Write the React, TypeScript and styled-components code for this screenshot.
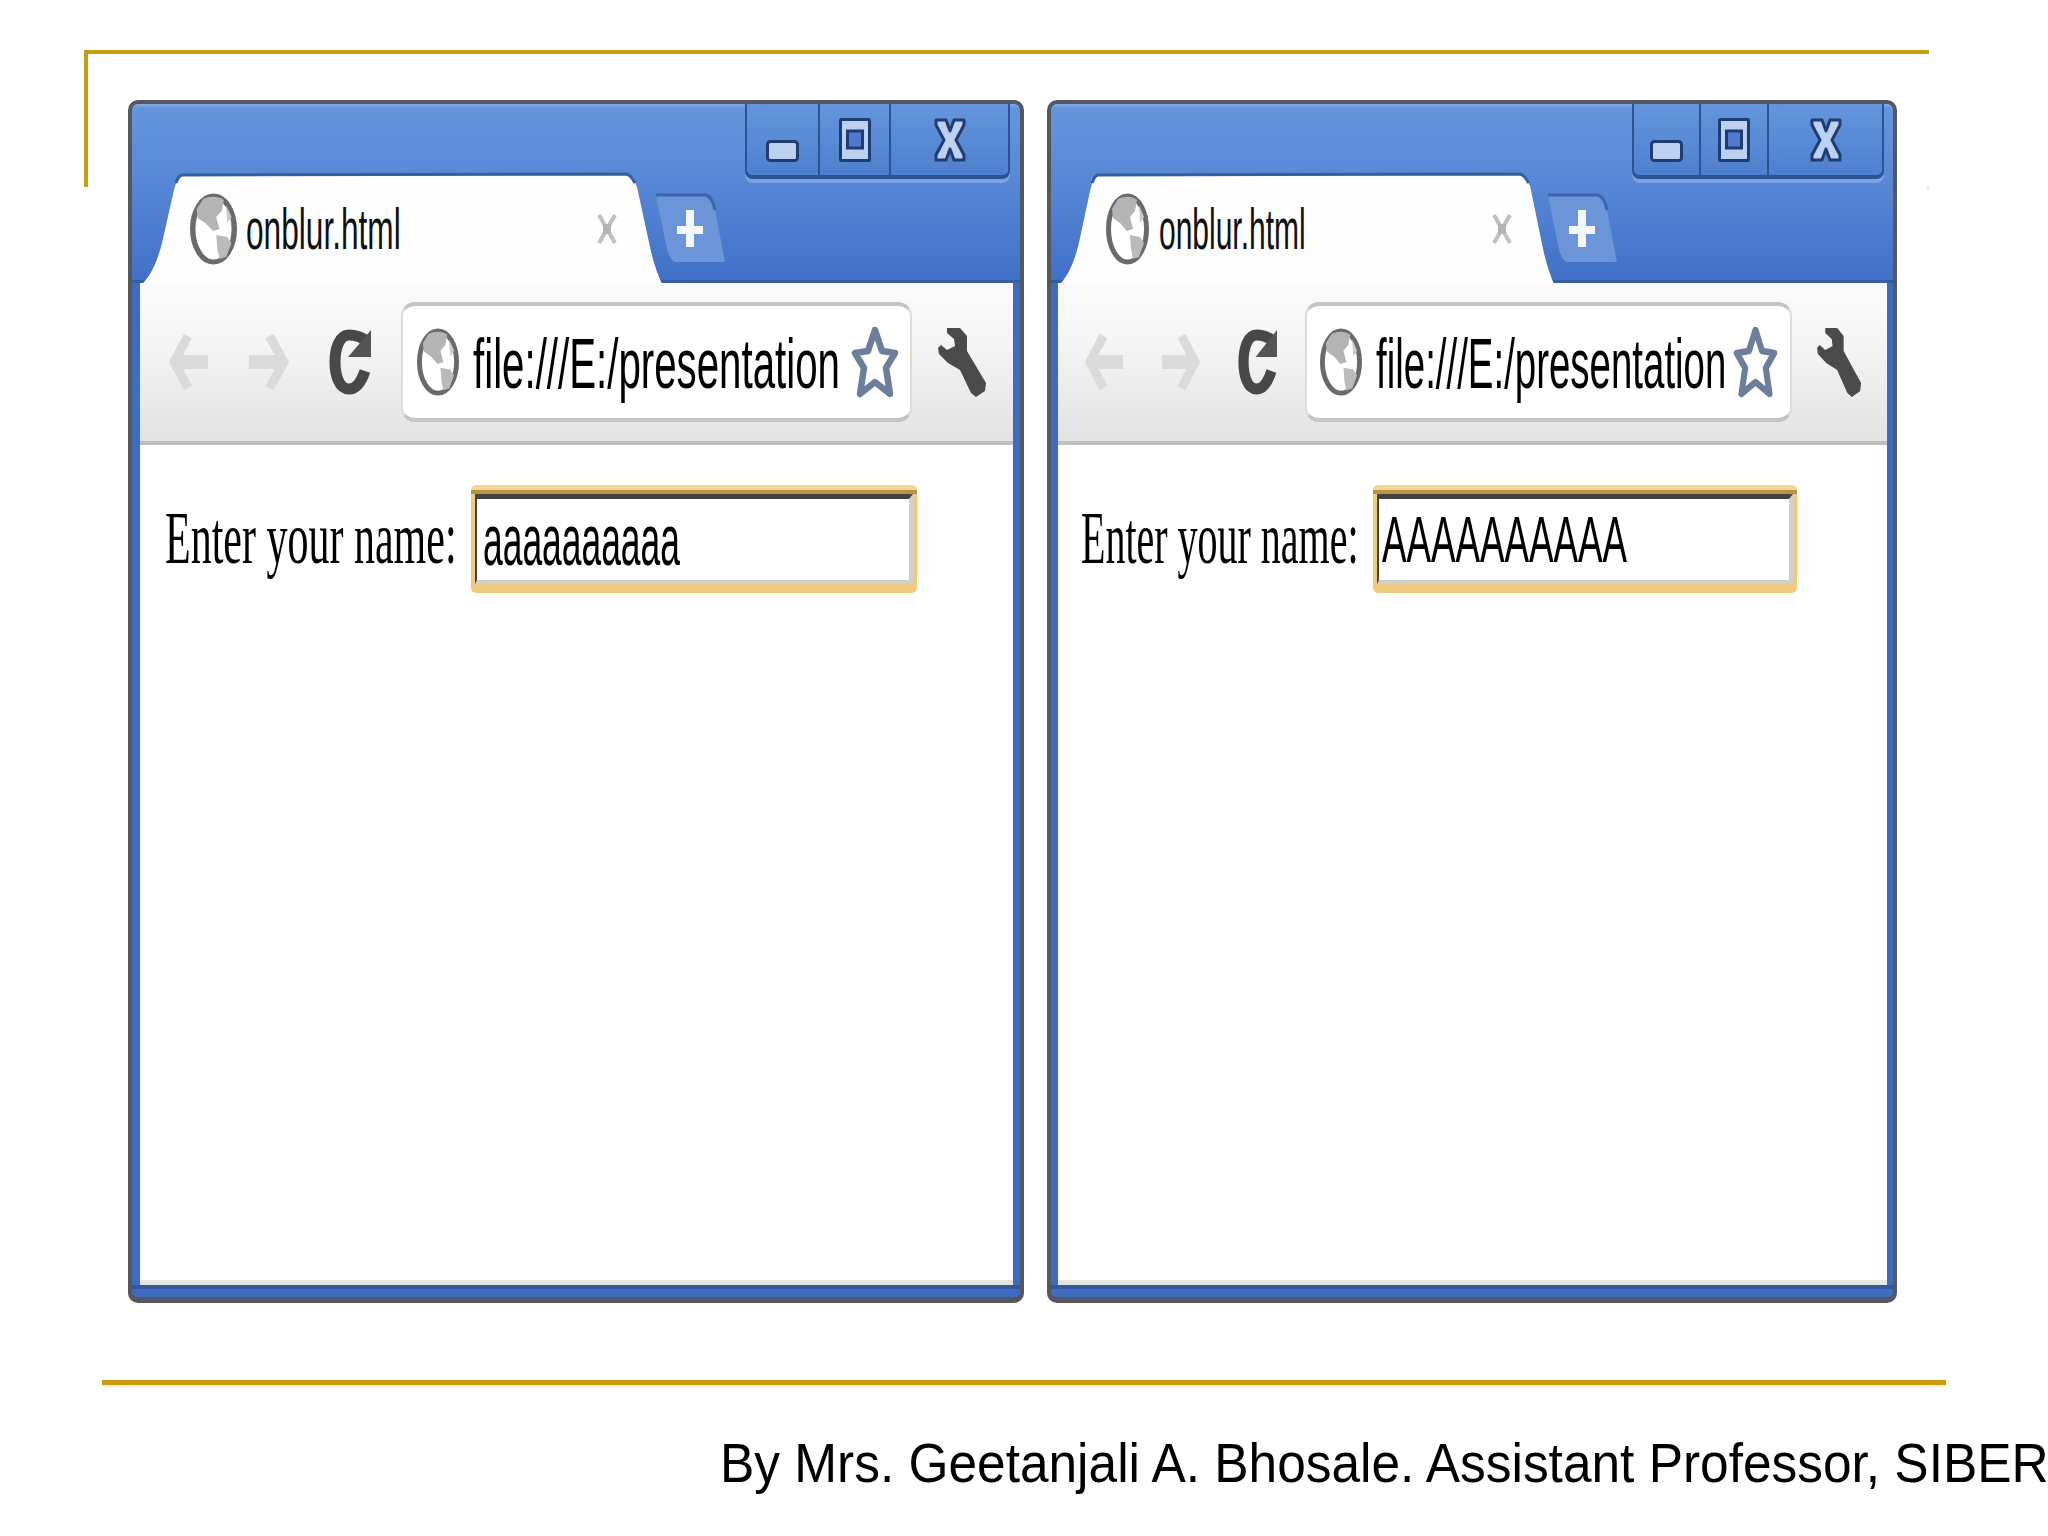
import React from "react";
import styled, { createGlobalStyle } from "styled-components";

const GlobalStyle = createGlobalStyle`
  html, body { margin: 0; padding: 0; background: #fff; }
  body { width: 2048px; height: 1536px; overflow: hidden; font-family: "Liberation Sans", Arial, sans-serif; }
`;

const Slide = styled.main`
  width: 2048px;
  height: 1536px;
  padding-top: 50px;
  box-sizing: border-box;
  overflow: hidden;
  background: #fff;
`;

const TopRule = styled.div`
  position: relative;
  width: 1845px;
  height: 4px;
  margin-left: 84px;
  background: #c79c13;
  &::before {
    content: "";
    position: absolute;
    left: 0;
    top: 0;
    width: 4px;
    height: 137px;
    background: #c79c13;
  }
  &::after {
    content: "";
    position: absolute;
    right: 0;
    top: 136px;
    width: 2px;
    height: 3px;
    background: #f1e4b4;
  }
`;

const WindowsRow = styled.div`
  display: flex;
  gap: 23px;
  margin: 46px 0 0 128px;
`;

const Frame = styled.section<{ $w: number; $pl: number; $pr: number }>`
  box-sizing: border-box;
  width: ${(p) => p.$w}px;
  height: 1203px;
  display: flex;
  flex-direction: column;
  border: 4px solid #55585f;
  border-bottom-width: 6px;
  border-radius: 10px;
  background: linear-gradient(to top, #3f6cc0 0 8px, #2f5a9e 8px 12px, #3f6cc0 12px);
  --pl: ${(p) => p.$pl}px;
  --pr: ${(p) => p.$pr}px;
`;

const TitleBar = styled.header`
  height: 179px;
  flex: none;
  display: flex;
  flex-direction: column;
  border-radius: 6px 6px 0 0;
  background: linear-gradient(#86aae2 0, #6395dc 4px, #5c8bd8 60px, #4070c6 100%);
`;

const Controls = styled.div<{ $mr: number }>`
  align-self: flex-end;
  flex: none;
  display: flex;
  height: 75px;
  margin: 0 ${(p) => p.$mr}px -4px 0;
  box-sizing: border-box;
  border: 2px solid #2d5392;
  border-top: 0;
  border-bottom-width: 4px;
  border-radius: 0 0 8px 8px;
  box-shadow: 0 4px 0 #7aa3e6;
  background: linear-gradient(#6396dd, #4f80cf);
`;

const ControlButton = styled.div<{ $w: number }>`
  width: ${(p) => p.$w}px;
  box-sizing: border-box;
  display: flex;
  justify-content: center;
  align-items: flex-end;
  padding-bottom: 13px;
  & + & { border-left: 2px solid #2d5392; }
`;

const TabStrip = styled.div`
  height: 108px;
  flex: none;
  display: flex;
  align-items: flex-start;
  padding-left: var(--pl);
  box-sizing: border-box;
  border-bottom: 3px solid #33609f;
`;

const Tab = styled.div<{ $w: number; $pr: number }>`
  position: relative;
  flex: none;
  width: ${(p) => p.$w}px;
  height: 108px;
  display: flex;
  align-items: center;
  box-sizing: border-box;
  padding-right: ${(p) => p.$pr}px;
`;

const TabShape = styled.svg`
  position: absolute;
  left: 0;
  top: 0;
  width: 100%;
  height: 100%;
  overflow: visible;
`;

const TabGlobe = styled.svg<{ $w: number; $ml: number }>`
  position: relative;
  flex: none;
  width: ${(p) => p.$w}px;
  height: 72px;
  margin-left: ${(p) => p.$ml}px;
`;

const Squeezed = styled.span<{ $w: number; $sx: number }>`
  display: block;
  flex: none;
  width: ${(p) => p.$w}px;
  white-space: nowrap;
  transform: scaleX(${(p) => p.$sx});
  transform-origin: left center;
`;

const TabTitle = styled(Squeezed)<{ $ml: number }>`
  position: relative;
  margin-left: ${(p) => p.$ml}px;
  font-size: 57px;
  line-height: 66px;
  color: #111;
`;

const TabClose = styled.svg`
  position: relative;
  flex: none;
  width: 22px;
  height: 34px;
  margin-left: auto;
`;

const NewTab = styled.svg<{ $ml: number }>`
  flex: none;
  width: 69px;
  height: 67px;
  margin: 20px 0 0 ${(p) => p.$ml}px;
  overflow: visible;
`;

const Body = styled.div`
  flex: 1;
  min-height: 0;
  display: flex;
  flex-direction: column;
  margin: 0 var(--pr) 12px var(--pl);
  position: relative;
`;

const Toolbar = styled.nav<{ $pl: number }>`
  flex: none;
  height: 162px;
  box-sizing: border-box;
  display: flex;
  align-items: center;
  padding-left: ${(p) => p.$pl}px;
  border-bottom: 4px solid #bfbfbf;
  background: linear-gradient(#fbfbfb, #f4f4f5 40%, #e2e2e4);
`;

const ToolIcon = styled.svg<{ $w: number; $h: number; $ml?: number }>`
  flex: none;
  width: ${(p) => p.$w}px;
  height: ${(p) => p.$h}px;
  margin-left: ${(p) => p.$ml ?? 0}px;
`;

const UrlBar = styled.div<{ $w: number; $ml: number; $gap: number }>`
  flex: none;
  width: ${(p) => p.$w}px;
  height: 120px;
  margin-left: ${(p) => p.$ml}px;
  padding-left: ${(p) => p.$gap}px;
  box-sizing: border-box;
  display: flex;
  align-items: center;
  background: #fff;
  border: 2px solid #dcdcdc;
  border-top: 4px solid #c4c4c4;
  border-bottom: 4px solid #c4c4c4;
  border-radius: 14px;
`;

const UrlText = styled(Squeezed)`
  margin: 3px 0 0 14px;
  font-size: 70px;
  line-height: 80px;
  color: #000;
`;

const Content = styled.div<{ $pl: number }>`
  flex: 1;
  min-height: 0;
  display: flex;
  align-items: flex-start;
  padding: 40px 0 0 ${(p) => p.$pl}px;
  background: #fff;
  box-shadow: inset 0 -5px 0 #e6e4de;
`;

const Label = styled(Squeezed)`
  font-family: "Liberation Serif", "Times New Roman", serif;
  font-size: 75px;
  line-height: 106px;
  color: #000;
`;

const FieldRing = styled.div<{ $w: number }>`
  flex: none;
  width: ${(p) => p.$w}px;
  height: 108px;
  box-sizing: border-box;
  padding: 9px 4px;
  border-radius: 5px;
  background: linear-gradient(#f3d592 0 5px, #bc9342 5px 9px, #efcb80 9px);
`;

const Field = styled.div<{ $pl: number }>`
  height: 90px;
  box-sizing: border-box;
  padding-left: ${(p) => p.$pl}px;
  display: flex;
  align-items: center;
  background: #fff;
  border-style: solid;
  border-width: 5px 4px 4px 2px;
  border-color: #444 #cfcfcb #cfcfcb #444;
`;

const FieldText = styled(Squeezed)<{ $size: number }>`
  font-size: ${(p) => p.$size}px;
  line-height: 80px;
  color: #000;
`;

const BottomRule = styled.div`
  width: 1844px;
  height: 5px;
  margin: 77px 0 0 102px;
  background: #c79c13;
  box-shadow: 0 2px 0 #f8f0d0;
`;

const Footer = styled.footer`
  width: 1324px;
  margin: 46px 0 0 720px;
  font-size: 56px;
  line-height: 64px;
  color: #000;
  white-space: nowrap;
  transform: scaleX(0.918);
  transform-origin: left center;
`;

const Globe = () => (
  <>
    <ellipse cx="21.5" cy="36" rx="19" ry="33" fill="#fff" stroke="#6a6a6a" strokeWidth="5" />
    <path d="M12 6 C18 3 26 3 31 7 L29 18 L24 24 L27 36 L21 38 L14 30 L7 25 L6 16 Z" fill="#b4b4b4" />
    <path d="M24 42 L34 44 L38 50 L33 64 L27 66 L25 56 Z" fill="#bababa" />
    <path d="M33 12 L38 24 L34 30 Z" fill="#c8c8c8" />
  </>
);

const config = [
  {
    w: 896, pl: 8, pr: 7, mr: 10, ctl: [71, 71, 119], tabW: 523, tabPr: 45, globeW: 47, globeMl: 50,
    titleW: 153, titleMl: 9, titleSx: 0.555, newMl: -7,
    tbPl: 29, icons: [39, 40, 43], gaps: [41, 39, 30], urlW: 511, urlGap: 14, urlGlobeW: 42,
    urlTextW: 367, urlSx: 0.575, starMl: 11, starW: 48, wrenchW: 49, wrenchMl: 26,
    cPl: 25, labelW: 306, labelSx: 0.56, fieldW: 446, fieldPl: 6, fieldText: "aaaaaaaaaa", fieldSize: 73, fieldSx: 0.485, fieldTextW: 200,
  },
  {
    w: 850, pl: 7, pr: 6, mr: 9, ctl: [65, 68, 115], tabW: 497, tabPr: 42, globeW: 43, globeMl: 48,
    titleW: 146, titleMl: 10, titleSx: 0.526, newMl: -7,
    tbPl: 27, icons: [38, 38, 40], gaps: [39, 37, 28], urlW: 487, urlGap: 13, urlGlobeW: 42,
    urlTextW: 349, urlSx: 0.549, starMl: 8, starW: 45, wrenchW: 45, wrenchMl: 25,
    cPl: 23, labelW: 292, labelSx: 0.533, fieldW: 424, fieldPl: 3, fieldText: "AAAAAAAAAA", fieldSize: 65, fieldSx: 0.565, fieldTextW: 250,
  },
];

type Config = (typeof config)[number];

const outline = { stroke: "#1f3d73", strokeWidth: 3, fill: "#bcd0ef" };

const BrowserWindow = ({ c }: { c: Config }) => (
  <Frame $w={c.w} $pl={c.pl} $pr={c.pr}>
    <TitleBar>
      <Controls $mr={c.mr}>
        <ControlButton $w={c.ctl[0]}>
          <svg width="33" height="22" viewBox="0 0 33 22">
            <rect x="1.5" y="1.5" width="30" height="19" rx="3" {...outline} />
          </svg>
        </ControlButton>
        <ControlButton $w={c.ctl[1]}>
          <svg width="32" height="44" viewBox="0 0 32 44">
            <rect x="1.5" y="1.5" width="29" height="41" rx="1" {...outline} />
            <rect x="8.5" y="13" width="15" height="17" fill="#4f7ad0" stroke="#1f3d73" strokeWidth="3" />
          </svg>
        </ControlButton>
        <ControlButton $w={c.ctl[2]}>
          <svg width="32" height="44" viewBox="0 0 32 44">
            <path d="M2 2 H12 L16 13 L20 2 H30 V7 L22 22 L30 37 V42 H20 L16 31 L12 42 H2 V37 L10 22 L2 7 Z" {...outline} strokeLinejoin="round" />
          </svg>
        </ControlButton>
      </Controls>
      <TabStrip>
        <Tab $w={c.tabW} $pr={c.tabPr}>
          <TabShape viewBox="0 0 523 108" preserveAspectRatio="none">
            <path d="M0 111 C8 104 16 92 22 68 L34 15 Q37 2 42 1 L486 0 Q493 2 497 12 L510 72 Q515 95 523 111 Z" fill="#fefefe" />
            <path d="M36 8 Q38 1 42 0 L486 -1 Q491 0 495 8" fill="none" stroke="#35609f" strokeWidth="3" />
          </TabShape>
          <TabGlobe $w={c.globeW} $ml={c.globeMl} viewBox="0 0 43 72" preserveAspectRatio="none">
            <Globe />
          </TabGlobe>
          <TabTitle $w={c.titleW} $ml={c.titleMl} $sx={c.titleSx}>onblur.html</TabTitle>
          <TabClose viewBox="0 0 22 34">
            <path d="M3 3 L19 31 M19 3 L3 31" stroke="#c0c0c0" strokeWidth="4" fill="none" />
            <rect x="7" y="12" width="8" height="10" fill="#b4b4b4" />
          </TabClose>
        </Tab>
        <NewTab $ml={c.newMl} viewBox="0 0 69 67">
          <path d="M0 0 L50 0 Q57 3 59 15 L69 67 L18 67 Q12 62 10 50 Z" fill="#6b94d9" />
          <path d="M0 0 L50 0 Q57 3 59 15" fill="none" stroke="#3b66ae" strokeWidth="3" />
          <path d="M34 15 V52 M21 35 H47" stroke="#f4f7fc" strokeWidth="8" fill="none" />
        </NewTab>
      </TabStrip>
    </TitleBar>
    <Body>
      <Toolbar $pl={c.tbPl}>
        <ToolIcon $w={c.icons[0]} $h={60} viewBox="0 0 39 60" preserveAspectRatio="none">
          <path d="M19 4 L5 30 L19 56 M7 30 H39" fill="none" stroke="#dadada" strokeWidth="9" />
          <path d="M12 30 H39" fill="none" stroke="#dadada" strokeWidth="14" />
        </ToolIcon>
        <ToolIcon $w={c.icons[1]} $h={60} $ml={c.gaps[0]} viewBox="0 0 39 60" preserveAspectRatio="none">
          <path d="M20 4 L34 30 L20 56 M32 30 H0" fill="none" stroke="#dadada" strokeWidth="9" />
          <path d="M27 30 H0" fill="none" stroke="#dadada" strokeWidth="14" />
        </ToolIcon>
        <ToolIcon $w={c.icons[2]} $h={66} $ml={c.gaps[1]} viewBox="0 0 43 66" preserveAspectRatio="none">
          <path d="M39 12 C32 7 26 6 21 6 C11 6 7 20 7 33 C7 46 11 60 21 60 C28 60 33 54 37 42" fill="none" stroke="#484848" strokeWidth="11" />
          <path d="M43 1 V28 H20 Z" fill="#555" />
        </ToolIcon>
        <UrlBar $w={c.urlW} $ml={c.gaps[2]} $gap={c.urlGap}>
          <ToolIcon $w={c.urlGlobeW} $h={68} viewBox="0 0 43 72" preserveAspectRatio="none">
            <Globe />
          </ToolIcon>
          <UrlText $w={c.urlTextW} $sx={c.urlSx}>file:///E:/presentation</UrlText>
          <ToolIcon $w={c.starW} $h={76} $ml={c.starMl} viewBox="0 0 48 76" preserveAspectRatio="none">
            <path d="M24 6 L31 27 L44 29 L35 44 L39 70 L24 58 L9 70 L13 44 L4 29 L17 27 Z" fill="#fff" stroke="#6d7d9c" strokeWidth="6.5" strokeLinejoin="round" />
          </ToolIcon>
        </UrlBar>
        <ToolIcon $w={c.wrenchW} $h={70} $ml={c.wrenchMl} viewBox="0 0 49 70" preserveAspectRatio="none">
          <path d="M9 1 L22 1 L29 9 L29 24 L48 56 L47 64 L38 70 L33 66 L22 43 L10 36 L1 27 L0 21 L3 18 L9 23 L17 19 L16 12 L9 6 Z" fill="#4b4b4d" />
        </ToolIcon>
      </Toolbar>
      <Content $pl={c.cPl}>
        <Label $w={c.labelW} $sx={c.labelSx}>Enter your name:</Label>
        <FieldRing $w={c.fieldW}>
          <Field $pl={c.fieldPl}>
            <FieldText $w={c.fieldTextW} $sx={c.fieldSx} $size={c.fieldSize}>{c.fieldText}</FieldText>
          </Field>
        </FieldRing>
      </Content>
    </Body>
  </Frame>
);

export default function App() {
  return (
    <>
      <GlobalStyle />
      <Slide>
        <TopRule />
        <WindowsRow>
          {config.map((c) => (
            <BrowserWindow key={c.fieldText} c={c} />
          ))}
        </WindowsRow>
        <BottomRule />
        <Footer>By Mrs. Geetanjali A. Bhosale. Assistant Professor, SIBER</Footer>
      </Slide>
    </>
  );
}
